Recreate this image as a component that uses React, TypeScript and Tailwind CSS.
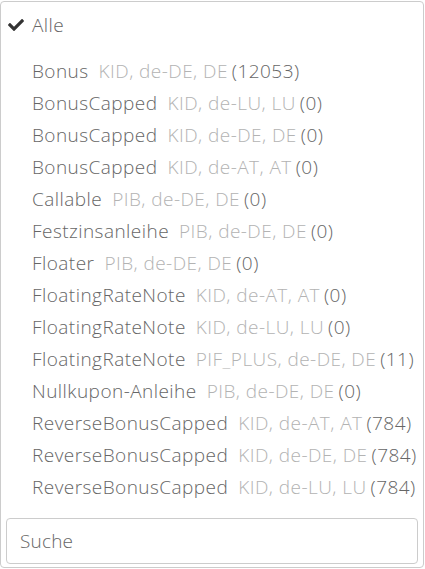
import { FaCheck } from 'react-icons/fa';

interface Product {
  name: string;
  meta: string;
  count: number;
}

const products: Product[] = [
  { name: 'Bonus', meta: 'KID, de-DE, DE', count: 12053 },
  { name: 'BonusCapped', meta: 'KID, de-LU, LU', count: 0 },
  { name: 'BonusCapped', meta: 'KID, de-DE, DE', count: 0 },
  { name: 'BonusCapped', meta: 'KID, de-AT, AT', count: 0 },
  { name: 'Callable', meta: 'PIB, de-DE, DE', count: 0 },
  { name: 'Festzinsanleihe', meta: 'PIB, de-DE, DE', count: 0 },
  { name: 'Floater', meta: 'PIB, de-DE, DE', count: 0 },
  { name: 'FloatingRateNote', meta: 'KID, de-AT, AT', count: 0 },
  { name: 'FloatingRateNote', meta: 'KID, de-LU, LU', count: 0 },
  { name: 'FloatingRateNote', meta: 'PIF_PLUS, de-DE, DE', count: 11 },
  { name: 'Nullkupon-Anleihe', meta: 'PIB, de-DE, DE', count: 0 },
  { name: 'ReverseBonusCapped', meta: 'KID, de-AT, AT', count: 784 },
  { name: 'ReverseBonusCapped', meta: 'KID, de-DE, DE', count: 784 },
  { name: 'ReverseBonusCapped', meta: 'KID, de-LU, LU', count: 784 },
];

export default function App() {
  return (
    <div className="w-[425px] h-[569px] bg-white pt-px">
      <div
        className="w-[424px] h-[567px] border border-[#ccc] rounded-[4px] bg-white flex flex-col font-light text-[19px] tracking-[0.45px] text-[#666]"
        style={{ fontFamily: '"Open Sans", sans-serif' }}
      >
        {/* "select all" entry */}
        <div className="h-[32px] mt-[7px] flex items-center">
          <FaCheck className="ml-[7px] text-[#333]" size={16} />
          <span className="ml-[8px]">Alle</span>
        </div>

        {/* Product options */}
        <ul className="mt-[14px]">
          {products.map((p, i) => (
            <li key={i} className="h-[32px] flex items-center pl-[31px] whitespace-nowrap">
              <span>{p.name}</span>
              <span className="ml-[10px] text-[#b3b3b3]">{p.meta}</span>
              <span className="ml-[4px]">({p.count})</span>
            </li>
          ))}
        </ul>

        {/* Search */}
        <div className="mt-auto px-[5px] pb-[3px]">
          <input
            type="text"
            placeholder="Suche"
            className="w-full h-[46px] border border-[#ccc] rounded-[4px] px-[13px] text-[19px] tracking-[0.2px] placeholder:text-[#666] outline-none"
          />
        </div>
      </div>
    </div>
  );
}
